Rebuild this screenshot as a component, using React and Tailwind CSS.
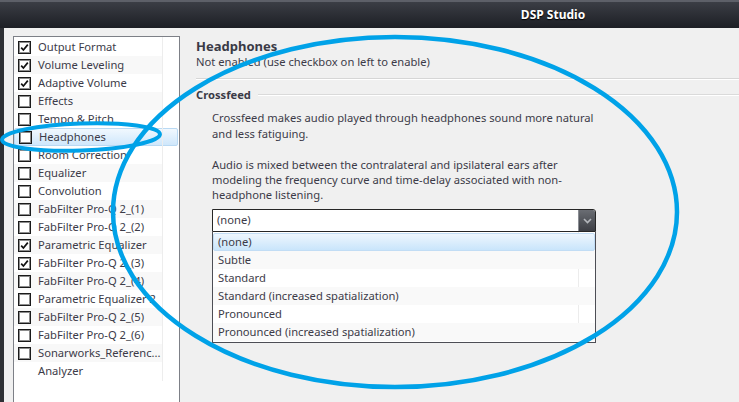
const items = [
  { label: "Output Format", checked: true },
  { label: "Volume Leveling", checked: true },
  { label: "Adaptive Volume", checked: true },
  { label: "Effects" },
  { label: "Tempo & Pitch" },
  { label: "Headphones", selected: true },
  { label: "Room Correction" },
  { label: "Equalizer" },
  { label: "Convolution" },
  { label: "FabFilter Pro-Q 2_(1)" },
  { label: "FabFilter Pro-Q 2_(2)" },
  { label: "Parametric Equalizer", checked: true },
  { label: "FabFilter Pro-Q 2_(3)", checked: true },
  { label: "FabFilter Pro-Q 2_(4)" },
  { label: "Parametric Equalizer 2" },
  { label: "FabFilter Pro-Q 2_(5)" },
  { label: "FabFilter Pro-Q 2_(6)" },
  { label: "Sonarworks_Referenc..." },
  { label: "Analyzer", noBox: true },
];

const options = [
  "(none)",
  "Subtle",
  "Standard",
  "Standard (increased spatialization)",
  "Pronounced",
  "Pronounced (increased spatialization)",
];

const CheckBox = ({ checked }) => (
  <span className="w-[13px] h-[13px] shrink-0 border border-[#1a1a1a] bg-white shadow-[inset_0_0_0_1px_#8c8c8c] flex items-center justify-center">
    {checked && (
      <svg width="9" height="9" viewBox="0 0 9 9">
        <path d="M1.2 4.6 L3.4 7 L7.8 1.6" fill="none" stroke="#111" strokeWidth="1.7" />
      </svg>
    )}
  </span>
);

const App = () => {
  return (
    <div
      className="relative w-[739px] h-[402px] overflow-hidden bg-[#f0f0f0] text-[#3c3b48]"
      style={{ fontFamily: '"Noto Sans", "Open Sans", sans-serif' }}
    >
      {/* title bar */}
      <div className="h-[28px] border-t-2 border-[#5d6068] bg-linear-to-b from-[#3b3e45] to-[#1d1f25] flex items-center">
        <div className="w-[553px]" />
        <span className="-translate-x-1/2 text-white font-bold text-[12px] [text-shadow:0_1px_1px_#000]">
          DSP Studio
        </span>
      </div>

      <div className="flex h-[374px]">
        <div className="w-[4px] bg-[#2e3035]" />

        {/* left list */}
        <div className="ml-[9px] mt-[8px] pt-[1px] w-[167px] border border-[#7d8087] border-b-0 bg-white relative">
          <div className="absolute left-[148px] top-0 h-[344px] border-l border-[#ededed]" />
          {items.map((it, i) => (
            <div
              key={it.label}
              className={
                "h-[18px] flex items-center pl-[4px] text-[11.2px] leading-[18px] " +
                (it.selected
                  ? "bg-linear-to-b from-[#f1f8fe] to-[#cfe7fb] border border-[#b9d9f3] rounded-[2px] w-[164px] pl-[3px]"
                  : i % 2 === 1
                  ? "bg-[#f8f8f8] w-[148px]"
                  : "w-[148px]")
              }
            >
              {it.noBox ? <span className="w-[13px]" /> : <CheckBox checked={it.checked} />}
              <span className="ml-[7px] whitespace-nowrap">{it.label}</span>
            </div>
          ))}
        </div>

        {/* right content */}
        <div className="flex-1 pl-[16px] pt-[10px]">
          <div className="font-bold text-[13px] leading-[16px] text-[#3a3a46]">Headphones</div>
          <div className="text-[11.2px] leading-[16px]">Not enabled (use checkbox on left to enable)</div>
          <div className="mt-[8px] border-t border-[#d6d6d6] border-b border-b-white" />
          <div className="mt-[7px] flex items-center">
            <span className="font-bold text-[11.2px] leading-[16px] text-[#3a3a46]">Crossfeed</span>
            <div className="ml-[7px] flex-1 border-t border-[#dadada] border-b border-b-white mt-[-1px]" />
          </div>

          <div className="pl-[16px] text-[11.2px]">
            <p className="mt-[7px] w-[392px] leading-[16px]">
              Crossfeed makes audio played through headphones sound more natural and less fatiguing.
            </p>
            <p className="mt-[15px] w-[392px] leading-[15px]">
              Audio is mixed between the contralateral and ipsilateral ears after modeling the frequency curve and
              time-delay associated with non-headphone listening.
            </p>

            {/* combo */}
            <div className="mt-[7px] w-[384px]">
              <div className="h-[23px] border border-[#262626] bg-white flex items-center rounded-tr-[3px]">
                <span className="flex-1 pl-[4px]">(none)</span>
                <div className="w-[17px] h-[21px] bg-linear-to-b from-[#6a6d73] to-[#3d3f45] border-l border-[#8a8d93] flex items-center justify-center rounded-tr-[2px]">
                  <svg width="9" height="6" viewBox="0 0 9 6">
                    <path d="M1 1 L4.5 4.5 L8 1" fill="none" stroke="#b4b7bc" strokeWidth="1.6" />
                  </svg>
                </div>
              </div>
              <div className="border border-t-0 border-[#4d4e55] bg-white pt-[1px] pb-[1px] relative">
                <div className="absolute left-[365px] top-0 bottom-0 border-l border-[#ececec]" />
                {options.map((o, i) => (
                  <div
                    key={o}
                    className={
                      "h-[18px] flex items-center relative " +
                      (i === 0
                        ? "bg-linear-to-b from-[#eef6fd] to-[#c9e5fb] border border-[#c2ddf5] rounded-[2px] pl-[4px]"
                        : i % 2 === 1
                        ? "bg-[#f9f9f9] pl-[5px]"
                        : "pl-[5px]")
                    }
                  >
                    {o}
                  </div>
                ))}
              </div>
            </div>
          </div>
        </div>
      </div>

      {/* hand drawn annotations */}
      <svg className="absolute inset-0 pointer-events-none" width="739" height="402" viewBox="0 0 739 402">
        <ellipse cx="395" cy="212" rx="282" ry="175" fill="none" stroke="#00a2e8" strokeWidth="4.5" />
        <ellipse
          cx="81"
          cy="137"
          rx="79"
          ry="13.5"
          fill="none"
          stroke="#00a2e8"
          strokeWidth="4"
          transform="rotate(-2 81 137)"
        />
      </svg>
    </div>
  );
};

export default App;
